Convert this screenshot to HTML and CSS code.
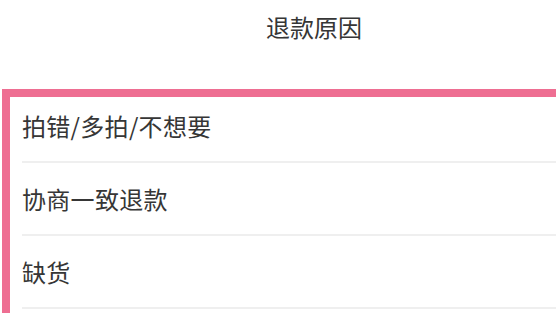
FILE: index.html
```html
<!DOCTYPE html>
<html lang="zh-CN">
<head>
<meta charset="utf-8">
<title>退款原因</title>
<link rel="stylesheet" href="styles.css">
</head>
<body>
<div class="page">
  <header class="header">
    <h1 class="title">退款原因</h1>
  </header>
  <ul class="reasons">
    <li class="reason"><span class="reason-text">拍错/多拍/不想要</span></li>
    <li class="reason"><span class="reason-text">协商一致退款</span></li>
    <li class="reason"><span class="reason-text">缺货</span></li>
  </ul>
</div>
</body>
</html>
```
FILE: styles.css
```css
html, body {
  margin: 0;
  padding: 0;
  background: #ffffff;
}
body {
  width: 556px;
  height: 313px;
  overflow: hidden;
  font-family: "Noto Sans CJK SC", "Noto Sans", sans-serif;
  color: #363636;
}
.page {
  display: flex;
  flex-direction: column;
  height: 313px;
  overflow: hidden;
}
.header {
  height: 90px;
  flex: none;
  box-sizing: border-box;
  padding-top: 10px;
  padding-left: 72px;
  display: flex;
  justify-content: center;
}
.title {
  margin: 0;
  font-size: 24px;
  font-weight: 400;
  line-height: 34px;
  color: #363636;
}
.reasons {
  position: relative;
  list-style: none;
  margin: 0;
  padding: 0;
  flex: 1;
  min-height: 0;
}
.reasons::before {
  content: "";
  position: absolute;
  left: 2px;
  top: -1px;
  right: 0;
  bottom: 0;
  border-top: 8px solid #ee6e92;
  border-left: 8px solid #ee6e92;
  pointer-events: none;
}
.reason {
  margin-left: 22px;
  height: 73px;
  box-sizing: border-box;
  border-bottom: 2px solid #efefef;
  display: flex;
  align-items: center;
}
.reason-text {
  font-size: 24px;
  line-height: 34px;
  letter-spacing: 0.3px;
}
```
